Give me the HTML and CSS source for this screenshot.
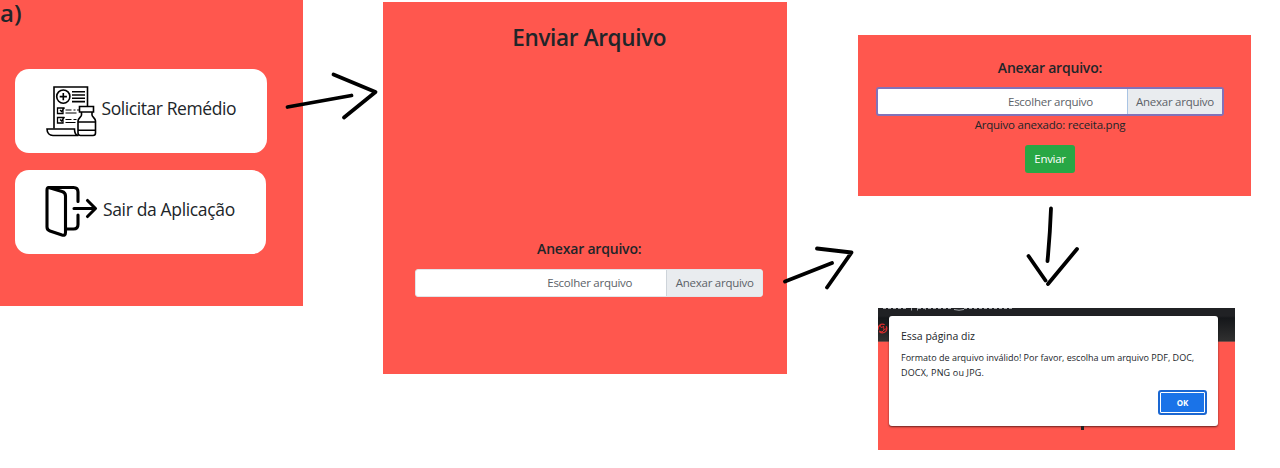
FILE: index.html
```html
<!DOCTYPE html>
<html lang="pt-BR">
<head>
<meta charset="utf-8">
<title>Enviar Arquivo</title>
<link rel="stylesheet" href="styles.css">
</head>
<body>
<main class="board">
  <section class="panel menu">
    <h2 class="menu-title">a)</h2>
    <a class="option">
      <svg class="option-icon" width="52" height="52" viewBox="0 0 52 52" fill="none" stroke="#000" stroke-width="1.6">
        <path d="M8 43.500V2h33.500v19"/>
        <circle cx="17.300" cy="11.600" r="6.600"/>
        <path d="M17.300 8v7.200M13.700 11.600h7.200M26 6.700h13M26 10h13M26 13.300h13M26 16.600h13"/>
        <path d="M11.500 23h5.500v5.500h-5.500zM11.500 32.500h5.500V38h-5.500zM14 25l1.500 1.500 3-4M14 34.500l1.500 1.500 3-4" stroke-width="1.300"/>
        <path d="M19.500 25h6m2 0h2m1.500 0h2M19.500 28h11M19.500 34.500h6m2 0h3M19.500 37.500h10" stroke-width="1.200"/>
        <path d="M32 50.500H7c-3.500 0-6-2.500-6-6.500h27.500c0 4 1.500 6.500 4 6.500"/>
        <path d="M33.500 21.500h14V27h-14zM35.500 27v3c0 2-3.500 3-3.500 6v12q0 2.500 2.500 2.500h12.500q2.500 0 2.500-2.500V36c0-3-3.500-4-3.500-6v-3M32 37h17.500M32 45.300h17.500"/>
      </svg>
      <span class="option-text request">Solicitar Remédio</span>
    </a>
    <a class="option exit">
      <svg class="option-icon" width="53" height="53" viewBox="0 0 53 53" fill="none" stroke="#000" stroke-width="3.100" stroke-linejoin="round" stroke-linecap="round">
        <path d="M4 2.500h24.500q4.500 0 4.500 4.500v9.500M33 30v9.500q0 4.500-4.500 4.500H21"/>
        <path d="M4.500 2.700 17 6.500q3.500 1 3.500 4.500v36.500q0 3.500-3.500 2.500L5 46q-3-1-3-4V5q0-3.300 2.500-2.300z"/>
        <path d="M29 23.500h21M42.500 15.500l8 8-8 8"/>
      </svg>
      <span class="option-text leave">Sair da Aplicação</span>
    </a>
  </section>

  <section class="panel upload">
    <h1 class="upload-title">Enviar Arquivo</h1>
    <div class="form">
      <label class="label">Anexar arquivo:</label>
      <div class="file"><span class="file-name">Escolher arquivo</span><span class="file-button">Anexar arquivo</span></div>
    </div>
  </section>

  <div class="results">
    <section class="panel attached">
      <label class="label">Anexar arquivo:</label>
      <div class="file"><span class="file-name">Escolher arquivo</span><span class="file-button">Anexar arquivo</span></div>
      <p class="status">Arquivo anexado: receita.png</p>
      <button class="send">Enviar</button>
    </section>
    <section class="panel browser">
      <div class="toolbar">
        <svg class="favicon" width="11" height="34" viewBox="0 0 11 34" fill="none" stroke="#d92c2c">
          <circle cx="4.500" cy="20.500" r="4.300" stroke-width="1.300" stroke-dasharray="10 2"/>
          <path d="M0 20l2-3 1.500 3 2-2 .5 4 3-2M1 23l3 1 2-2" stroke-width="1"/>
        </svg>
        <svg class="address" width="150" height="4" viewBox="0 0 150 4" fill="none" stroke="#a4a7ab" stroke-width="1">
          <path d="M5 .5h25M40 .5h33M86 .5h50" stroke-dasharray="3 2"/>
          <path d="M33.500 0v2.500M39.500 0v2.500M47.500 0v1.500M76 1.500q5 1.500 10 0"/>
        </svg>
      </div>
      <div class="dialog">
        <h3 class="dialog-title">Essa página diz</h3>
        <p class="dialog-text">Formato de arquivo inválido! Por favor, escolha um arquivo PDF, DOC,<br><span class="formats">DOCX, PNG ou JPG.</span></p>
        <button class="ok">OK</button>
      </div>
      <span class="caret"></span>
    </section>
  </div>

  <svg class="arrows" width="1280" height="468" viewBox="0 0 1280 468" fill="none" stroke="#000" stroke-width="3.800" stroke-linecap="round" stroke-linejoin="round">
    <path d="M287.500 107 351.500 95.500M333.500 74.500 375.500 92 344 117.500"/>
    <path d="M785 281.500 832 263M817 248.500 851.500 252.500 827 287.500"/>
    <path d="M1051 208.500Q1050 235 1047.500 261M1028.500 256 1045.500 280.500M1077 249 1048 284"/>
  </svg>
</main>
</body>
</html>
```
FILE: styles.css
```css
* { box-sizing: border-box; }
body { margin: 0; background: #fff; color: #212529; font-family: "Open Sans", "Noto Sans", sans-serif; }
h1, h2, h3, p { margin: 0; }
.board { position: relative; display: flex; align-items: flex-start; width: 1280px; height: 468px; overflow: hidden; }
.panel { background: #ff574e; }

.menu { width: 302.5px; height: 306px; margin-right: 80px; padding-left: 15px; }
.menu-title { height: 69px; margin-left: -15px; font-size: 24px; font-weight: 600; line-height: 26px; }
.option { display: flex; align-items: center; width: 252px; height: 83.5px; padding-left: 31px; border-radius: 14px; background: #fff; }
.option.exit { width: 251px; margin-top: 17.500px; padding-left: 30px; }
.option-icon { flex: none; }
.option-text { margin: 0 0 5px 3.500px; font-size: 17.500px; line-height: 24px; letter-spacing: -.42px; white-space: nowrap; }
.leave { margin-left: 5px; letter-spacing: -.35px; }

.upload { width: 404.5px; height: 372px; margin: 1.500px 71px 0 0; }
.upload-title { padding: 19px 0 0 9px; font-size: 22.500px; font-weight: 600; line-height: 34px; letter-spacing: -.33px; text-align: center; }
.form { margin: 184px 24px 0 33px; display: flex; flex-direction: column; align-items: center; }
.label { font-size: 14px; font-weight: 600; line-height: 20px; letter-spacing: -.2px; white-space: nowrap; }
.file { display: flex; width: 348px; height: 28px; margin-top: 10px; border: 1px solid #e1e5e9; border-radius: 3px; background: #fff; color: #5c6268; font-size: 11.500px; line-height: 26px; letter-spacing: -.26px; white-space: nowrap; overflow: hidden; }
.file-name { width: 250px; padding-right: 34px; text-align: right; }
.file-button { flex: 1; border-left: 1px solid #ced4da; background: #e9ecef; text-align: center; }

.results { width: 393px; padding-top: 35px; }
.attached { display: flex; flex-direction: column; align-items: center; height: 161px; padding: 23px 9px 0 0; }
.attached .file { height: 29px; margin-top: 9px; border: 2px solid #8272b8; line-height: 25px; }
.attached .file-button { border-color: #a9c4e4; }
.attached .file-name { width: 249px; }
.status { font-size: 11.500px; line-height: 18px; letter-spacing: -.22px; white-space: nowrap; }
.send { width: 50px; height: 28px; margin-top: 11px; padding: 0; border: 0; border-radius: 3px; background: #28a745; color: #fff; font: 11.500px/28px "Open Sans", sans-serif; letter-spacing: -.3px; }

.browser { position: relative; width: 357px; height: 142px; margin: 111.500px 0 0 20px; }
.toolbar { position: relative; height: 34px; border-bottom: 1px solid #7b4945; background: linear-gradient(#202124 0 8px, #15171a 10px, #303030); }
.favicon, .address { position: absolute; top: 0; left: 0; }
.dialog { position: absolute; top: 8px; left: 11px; display: flex; flex-direction: column; width: 329px; height: 110.500px; padding: 11px 11px 11px 12px; border-radius: 3px; background: #fff; box-shadow: 0 1px 2px #0009; }
.dialog-title { font-size: 10.500px; font-weight: 400; line-height: 18px; }
.dialog-text { margin-top: 5px; font-size: 9px; line-height: 15px; white-space: nowrap; }
.formats { letter-spacing: .17px; }
.ok { align-self: flex-end; width: 49px; height: 25px; margin-top: auto; padding: 0; border: 2px solid #1a67d2; border-radius: 3px; background: #1a73e8; box-shadow: inset 0 0 0 1px #fff; color: #fff; font: 700 8px/20px "Open Sans", sans-serif; }
.caret { position: absolute; top: 118.500px; left: 203px; width: 3px; height: 3.500px; background: #222; }
.arrows { position: absolute; top: 0; left: 0; pointer-events: none; }
```
